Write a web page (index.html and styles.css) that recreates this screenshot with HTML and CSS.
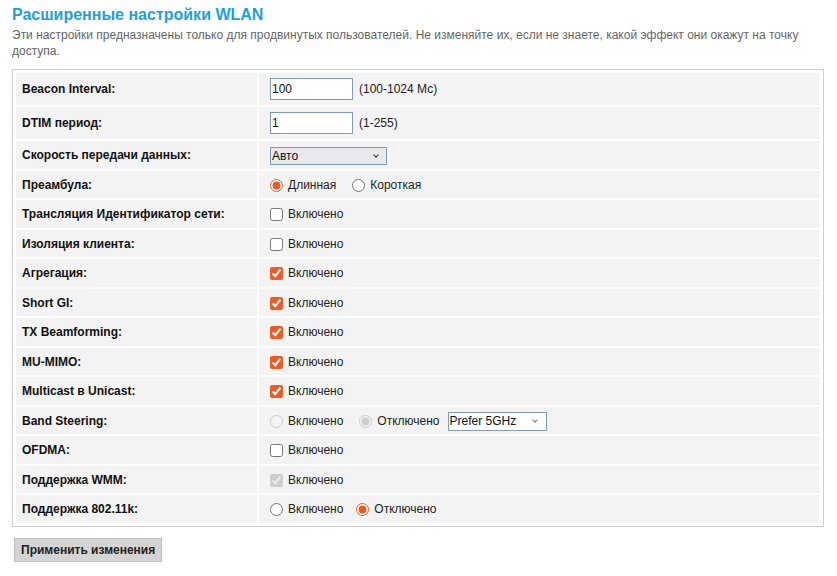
FILE: index.html
```html
<!DOCTYPE html>
<html lang="ru">
<head>
<meta charset="utf-8">
<title>Расширенные настройки WLAN</title>
<link rel="stylesheet" href="styles.css">
</head>
<body>
<h1 class="title">Расширенные настройки WLAN</h1>
<p class="desc">Эти настройки предназначены только для продвинутых пользователей. Не изменяйте их, если не знаете, какой эффект они окажут на точку доступа.</p>
<div class="panel">
<table class="grid">
<tr>
<td class="label">Beacon Interval:</td>
<td class="value"><div class="opt"><input class="text" type="text" value="100"><span class="hint">(100-1024 Мс)</span></div></td>
</tr>
<tr>
<td class="label">DTIM период:</td>
<td class="value"><div class="opt"><input class="text" type="text" value="1"><span class="hint">(1-255)</span></div></td>
</tr>
<tr>
<td class="label">Скорость передачи данных:</td>
<td class="value"><div class="opt"><span class="selwrap sel-rate"><select class="sel"><option>Авто</option></select></span></div></td>
</tr>
<tr>
<td class="label">Преамбула:</td>
<td class="value"><div class="opt">
<label class="choice"><input type="radio" name="pre" checked>Длинная</label>
<label class="choice gap-16"><input type="radio" name="pre">Короткая</label>
</div></td>
</tr>
<tr>
<td class="label">Трансляция Идентификатор сети:</td>
<td class="value"><div class="opt"><label class="choice"><input type="checkbox">Включено</label></div></td>
</tr>
<tr>
<td class="label">Изоляция клиента:</td>
<td class="value"><div class="opt"><label class="choice"><input type="checkbox">Включено</label></div></td>
</tr>
<tr>
<td class="label">Агрегация:</td>
<td class="value"><div class="opt"><label class="choice"><input type="checkbox" checked>Включено</label></div></td>
</tr>
<tr>
<td class="label">Short GI:</td>
<td class="value"><div class="opt"><label class="choice"><input type="checkbox" checked>Включено</label></div></td>
</tr>
<tr>
<td class="label">TX Beamforming:</td>
<td class="value"><div class="opt"><label class="choice"><input type="checkbox" checked>Включено</label></div></td>
</tr>
<tr>
<td class="label">MU-MIMO:</td>
<td class="value"><div class="opt"><label class="choice"><input type="checkbox" checked>Включено</label></div></td>
</tr>
<tr>
<td class="label">Multicast в Unicast:</td>
<td class="value"><div class="opt"><label class="choice"><input type="checkbox" checked>Включено</label></div></td>
</tr>
<tr>
<td class="label">Band Steering:</td>
<td class="value"><div class="opt">
<label class="choice"><input type="radio" name="bs" disabled>Включено</label>
<label class="choice gap-16"><input type="radio" name="bs" checked disabled>Отключено</label>
<span class="selwrap sel-band"><select class="sel"><option>Prefer 5GHz</option></select></span>
</div></td>
</tr>
<tr>
<td class="label">OFDMA:</td>
<td class="value"><div class="opt"><label class="choice"><input type="checkbox">Включено</label></div></td>
</tr>
<tr>
<td class="label">Поддержка WMM:</td>
<td class="value"><div class="opt"><label class="choice"><input type="checkbox" checked disabled>Включено</label></div></td>
</tr>
<tr>
<td class="label">Поддержка 802.11k:</td>
<td class="value"><div class="opt">
<label class="choice"><input type="radio" name="k">Включено</label>
<label class="choice gap-13"><input type="radio" name="k" checked>Отключено</label>
</div></td>
</tr>
</table>
</div>
<button class="apply" type="button">Применить изменения</button>
</body>
</html>
```

FILE: styles.css
```css
html, body {
  margin: 0;
  background: #fff;
}
body {
  padding: 5px 13px 0 12px;
  font-family: "Liberation Sans", Arial, sans-serif;
  font-size: 12px;
  color: #222;
}
.title {
  margin: 0;
  font-size: 16px;
  line-height: 20px;
  font-weight: bold;
  color: #1ba1dc;
}
.desc {
  margin: 2px 0 0 0;
  font-size: 12px;
  line-height: 16px;
  color: #666;
}
.panel {
  margin-top: 10px;
  border: 1px solid #cfcfcf;
  padding: 1px;
}
.grid {
  width: 100%;
  table-layout: fixed;
  border-collapse: separate;
  border-spacing: 2px;
}
.grid td {
  background: #f3f3f3;
  padding: 5px 6px 3px 6px;
  line-height: 19.5px;
  vertical-align: middle;
  box-sizing: border-box;
}
.grid td.label {
  width: 241px;
  font-weight: bold;
  color: #111;
}
.grid td.value {
  padding-left: 11px;
}
.opt {
  display: flex;
  align-items: center;
  min-height: 19.5px;
}
.text {
  box-sizing: border-box;
  width: 83px;
  height: 22px;
  margin: 0 0 2px 0;
  padding: 1px 1px;
  border: 1px solid #7f9db9;
  font-family: "Liberation Sans", Arial, sans-serif;
  font-size: 12px;
  color: #111;
  background: #fff;
}
.hint {
  margin-left: 6px;
}
.choice {
  display: flex;
  align-items: center;
  gap: 5px;
}
.choice input {
  margin: 0;
  width: 13px;
  height: 13px;
  accent-color: #f05a24;
}
.gap-16 {
  margin-left: 16px;
}
.gap-13 {
  margin-left: 13px;
}
.selwrap {
  position: relative;
  display: inline-flex;
}
.selwrap::after {
  content: "";
  position: absolute;
  top: 50%;
  width: 3px;
  height: 3px;
  margin-top: -3px;
  border-right: 1px solid #333;
  border-bottom: 1px solid #333;
  transform: rotate(45deg);
  pointer-events: none;
}
.sel {
  -webkit-appearance: none;
  appearance: none;
  box-sizing: border-box;
  width: 100%;
  height: 18px;
  margin: 0;
  border: 1px solid #7f9db9;
  border-radius: 0;
  font-family: "Liberation Sans", Arial, sans-serif;
  font-size: 12px;
  line-height: 16px;
  color: #111;
  padding: 0 1px;
  background: transparent;
}
.sel-rate {
  width: 117px;
  background: #e9e9ed;
}
.sel-rate::after {
  right: 9px;
}
.sel-band {
  width: 99px;
  margin-left: 8px;
  background: #fff;
}
.sel-band .sel {
  height: 19px;
}
.sel-band::after {
  right: 10px;
  border-color: #777;
}
.apply {
  margin: 11px 0 0 2px;
  height: 24px;
  padding: 0 6px;
  background: #d4d4d4;
  border: 1px solid #bdbdbd;
  border-radius: 0;
  font-family: "Liberation Sans", Arial, sans-serif;
  font-size: 12px;
  font-weight: bold;
  color: #222;
}
```
